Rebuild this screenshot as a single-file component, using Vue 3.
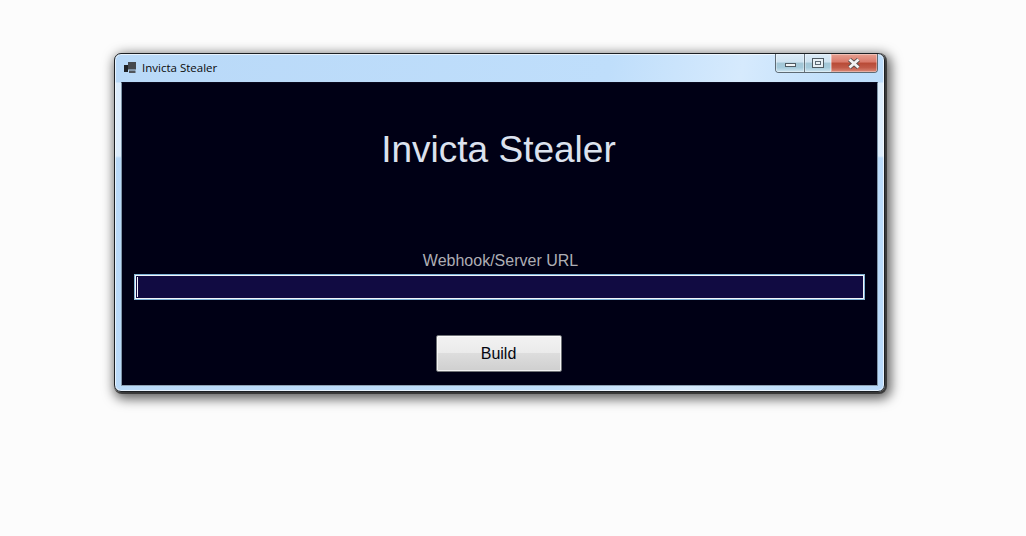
<script setup>
const title = 'Invicta Stealer'
</script>

<template>
  <div class="page">
    <div class="window">
      <div class="titlebar">
        <svg class="app-icon" width="12" height="11" viewBox="0 0 12 11">
          <rect x="4" y="0" width="8" height="7.5" fill="#45494e" />
          <rect x="0" y="3" width="4" height="7" fill="#1f2226" />
          <rect x="5" y="8.5" width="6.5" height="2.5" fill="#50555b" />
        </svg>
        <span class="caption">{{ title }}</span>
        <div class="controls">
          <div class="ctl ctl-min">
            <span class="min-glyph"></span>
          </div>
          <div class="ctl ctl-max">
            <span class="max-glyph"></span>
          </div>
          <div class="ctl ctl-close">
            <svg width="14" height="11" viewBox="0 0 14 11">
              <path d="M2.5 1.5 L11.5 9.5 M11.5 1.5 L2.5 9.5" stroke="#55504e" stroke-width="4.4" fill="none" />
              <path d="M2.5 1.5 L11.5 9.5 M11.5 1.5 L2.5 9.5" stroke="#f2f2f2" stroke-width="2.8" fill="none" />
            </svg>
          </div>
        </div>
      </div>
      <div class="client">
        <h1 class="heading">{{ title }}</h1>
        <label class="label" for="url">Webhook/Server URL</label>
        <div class="input" id="url"><span class="caret"></span></div>
        <button class="build" type="button">Build</button>
      </div>
    </div>
  </div>
</template>

<style>
html, body { margin: 0; background: #fcfcfc; overflow: hidden; }
</style>

<style scoped>
.page {
  width: 1026px;
  height: 536px;
  background: #fcfcfc;
  padding: 53px 0 0 114px;
  box-sizing: border-box;
  font-family: "Liberation Sans", Arial, sans-serif;
}
.window {
  width: 771px;
  height: 339px;
  box-sizing: border-box;
  display: flex;
  flex-direction: column;
  border: 1px solid #1c2024;
  border-radius: 7px;
  background:
    linear-gradient(180deg, rgba(255, 255, 255, 0) 0, rgba(255, 255, 255, 0) 28px, rgba(255, 255, 255, 0.5) 29px, rgba(255, 255, 255, 0.5) 102px, rgba(255, 255, 255, 0) 104px),
    linear-gradient(100deg, #b9d9f8 0%, #bfdefb 60%, #d6eafd 76%, #c0dffb 88%, #b8d9fa 100%);
  box-shadow: 1px 1px 0 1px rgba(30, 30, 30, 0.7), 3px 4px 12px 3px rgba(0, 0, 0, 0.62), inset 0 0 0 1px rgba(255, 255, 255, 0.65);
  padding: 0 6px 5px 6px;
}
.titlebar {
  height: 28px;
  flex: none;
  display: flex;
  align-items: flex-start;
  position: relative;
}
.app-icon {
  margin: 8px 0 0 3px;
  flex: none;
}
.caption {
  margin: 6px 0 0 6px;
  font-family: "Open Sans", "Noto Sans", sans-serif;
  font-size: 11.5px;
  line-height: 15px;
  color: #0a0a0a;
}
.controls {
  margin-left: auto;
  display: flex;
  height: 19px;
  box-sizing: border-box;
  border: 1px solid #5d6a74;
  border-top: none;
  border-radius: 0 0 4px 4px;
  overflow: hidden;
}
.ctl {
  display: flex;
  align-items: center;
  justify-content: center;
  background: linear-gradient(180deg, #dcebf7 0%, #cfe3f1 45%, #a3c6d6 50%, #a5cadb 75%, #cfe6f3 100%);
  box-shadow: inset 0 0 0 1px rgba(255, 255, 255, 0.35);
}
.ctl-min {
  width: 28px;
  border-right: 1px solid #67747e;
}
.ctl-max {
  width: 26px;
}
.ctl-close {
  width: 46px;
  background: linear-gradient(180deg, #e7a091 0%, #d9796a 45%, #b84a36 50%, #c05a48 75%, #dc8a78 100%);
}
.min-glyph {
  width: 11px;
  height: 4px;
  box-sizing: border-box;
  margin-top: 4px;
  border: 1px solid #4f5a62;
  background: #f1f5f7;
}
.max-glyph {
  width: 12px;
  height: 10px;
  box-sizing: border-box;
  border: 1px solid #4f5a62;
  background: #e8f0f5;
  display: flex;
  align-items: center;
  justify-content: center;
  box-shadow: inset 0 0 0 2px #e8f0f5, inset 0 0 0 3px #5d6a74;
}
.client {
  flex: 1;
  min-height: 0;
  background: #000015;
  border: 1px solid #7f95a8;
  border-bottom-color: #8ea2b3;
  border-top-color: #0a0a1e;
  display: flex;
  flex-direction: column;
  align-items: center;
  box-sizing: border-box;
}
.heading {
  margin: 45px 2px 0 0;
  font-size: 37px;
  font-weight: 400;
  line-height: 43px;
  color: #dce2ee;
}
.label {
  margin: 80px 0 0 2px;
  font-size: 16px;
  line-height: 20px;
  color: #aeaeb4;
}
.input {
  margin-top: 3px;
  width: 731px;
  height: 26px;
  box-sizing: border-box;
  border: 2px solid #f2f6fb;
  outline: 1px solid #7fb4d6;
  outline-offset: -1px;
  background: #110b42;
  padding: 1px;
  display: flex;
  border-radius: 1px;
}
.caret {
  width: 1px;
  height: 100%;
  background: #f4f4f8;
}
.build {
  margin: 35px 2px 0 0;
  width: 126px;
  height: 37px;
  padding: 0;
  box-sizing: border-box;
  border: 1px solid #6f7276;
  border-radius: 2px;
  background: linear-gradient(180deg, #f2f2f2 0%, #ebebeb 47%, #dddddd 50%, #cfcfcf 100%);
  box-shadow: inset 0 0 0 1px rgba(255, 255, 255, 0.7);
  font-family: "Liberation Sans", Arial, sans-serif;
  font-size: 16px;
  color: #05050f;
}
</style>
